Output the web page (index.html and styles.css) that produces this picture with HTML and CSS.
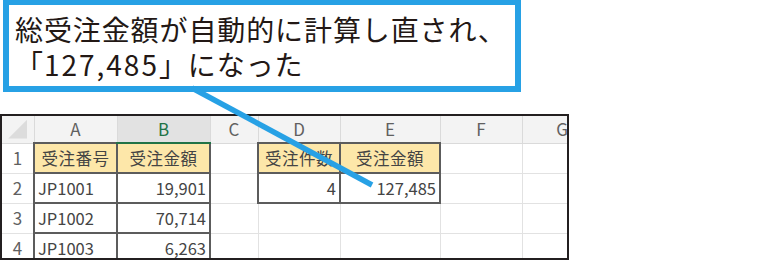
FILE: index.html
```html
<!DOCTYPE html>
<html lang="ja">
<head>
    <meta charset="UTF-8">
    <title>受注集計</title>
    <link rel="stylesheet" href="styles.css">
</head>
<body>
    <div class="page">
        <div class="callout">
            <p>総受注金額が自動的に計算し直され、</p>
            <p>「<span class="digits">127,485</span>」になった</p>
        </div>

        <div class="sheet-wrap">
            <table class="sheet">
                <colgroup>
                    <col class="c-row">
                    <col class="c-a">
                    <col class="c-b">
                    <col class="c-c">
                    <col class="c-d">
                    <col class="c-e">
                    <col class="c-f">
                    <col class="c-g">
                </colgroup>
                <tr class="col-heads">
                    <th class="corner"><span class="tri"></span></th>
                    <th>A</th>
                    <th class="active">B</th>
                    <th>C</th>
                    <th>D</th>
                    <th>E</th>
                    <th>F</th>
                    <th>G</th>
                </tr>
                <tr>
                    <th class="row-head">1</th>
                    <td class="bx hdr">受注番号</td>
                    <td class="bx hdr">受注金額</td>
                    <td></td>
                    <td class="bx hdr">受注件数</td>
                    <td class="bx hdr">受注金額</td>
                    <td></td>
                    <td></td>
                </tr>
                <tr>
                    <th class="row-head">2</th>
                    <td class="bx">JP1001</td>
                    <td class="bx num">19,901</td>
                    <td></td>
                    <td class="bx num">4</td>
                    <td class="bx num">127,485</td>
                    <td></td>
                    <td></td>
                </tr>
                <tr>
                    <th class="row-head">3</th>
                    <td class="bx">JP1002</td>
                    <td class="bx num">70,714</td>
                    <td></td>
                    <td></td>
                    <td></td>
                    <td></td>
                    <td></td>
                </tr>
                <tr>
                    <th class="row-head">4</th>
                    <td class="bx">JP1003</td>
                    <td class="bx num">6,263</td>
                    <td></td>
                    <td></td>
                    <td></td>
                    <td></td>
                    <td></td>
                </tr>
                <tr class="tail">
                    <th class="row-head"></th>
                    <td class="bx"></td>
                    <td class="bx"></td>
                    <td></td>
                    <td></td>
                    <td></td>
                    <td></td>
                    <td></td>
                </tr>
            </table>
        </div>

        <!-- leader from the note to the total cell -->
        <svg class="pointer" width="783" height="260" viewBox="0 0 783 260">
            <line x1="192" y1="88" x2="372" y2="185" stroke="#27a1e5" stroke-width="5.5"/>
        </svg>
    </div>
</body>
</html>
```

FILE: styles.css
```css
body {
    margin: 0;
    background-color: #fff;
    font-family: "Noto Sans CJK JP", "Noto Sans", sans-serif;
}
.page {
    position: relative;
    width: 783px;
    height: 260px;
    overflow: hidden;
}

/* note box */
.callout {
    margin-left: 3px;
    width: 518px;
    height: 92px;
    box-sizing: border-box;
    padding: 7px 0 0 6px;
    border: 6px solid #27a1e5;
    border-top-width: 5px;
    background-color: #fff;
}
.callout p {
    margin: 0;
    height: 35px;
    font-size: 28px;
    line-height: 35px;
    letter-spacing: 0.9px;
    color: #231815;
    white-space: nowrap;
}
.callout .digits {
    letter-spacing: 2px;
}

/* worksheet */
.sheet-wrap {
    margin-top: 22px;
    width: 569px;
    height: 146px;
    box-sizing: border-box;
    border: 2px solid #231f20;
    overflow: hidden;
}
.sheet {
    border-collapse: collapse;
    table-layout: fixed;
    width: 600px;
    font-size: 16.5px;
    color: #444;
}
.c-row { width: 32px; }
.c-a { width: 83px; }
.c-b { width: 93px; }
.c-c { width: 48px; }
.c-d { width: 82px; }
.c-e { width: 100px; }
.c-f { width: 82px; }
.c-g { width: 80px; }

.sheet th,
.sheet td {
    border: 1px solid #e2e2e2;
    padding: 0 3px;
    height: 28px;
    white-space: nowrap;
    overflow: hidden;
    line-height: 20px;
}
.sheet tr:first-child th,
.sheet tr:first-child td { border-top: none; }
.sheet th:first-child { border-left: none; }

.col-heads th {
    height: 26px;
    background-color: #f3f3f3;
    border-color: #dadada;
    font-weight: normal;
    font-size: 17px;
    color: #606060;
    text-align: center;
}
.col-heads th.active {
    background-color: #e2e2e2;
    border-bottom: 2px solid #217346;
    color: #217346;
}
.corner {
    text-align: right;
    vertical-align: bottom;
}
.tri {
    display: inline-block;
    width: 19px;
    height: 19px;
    margin-bottom: 1px;
    background-color: #dcdcdc;
    clip-path: polygon(100% 0, 100% 100%, 0 100%);
}

.row-head {
    font-weight: normal;
    font-size: 17px;
    color: #606060;
    text-align: center;
    background-color: #fff;
    border-color: #dadada;
}

.sheet td.bx { border: 2px solid #5c5c5c; }
.sheet td.hdr {
    background-color: #fde7a9;
    text-align: center;
    letter-spacing: 0.5px;
}
.sheet td.num { text-align: right; }

.pointer {
    position: absolute;
    left: 0;
    top: 0;
    pointer-events: none;
}
```
